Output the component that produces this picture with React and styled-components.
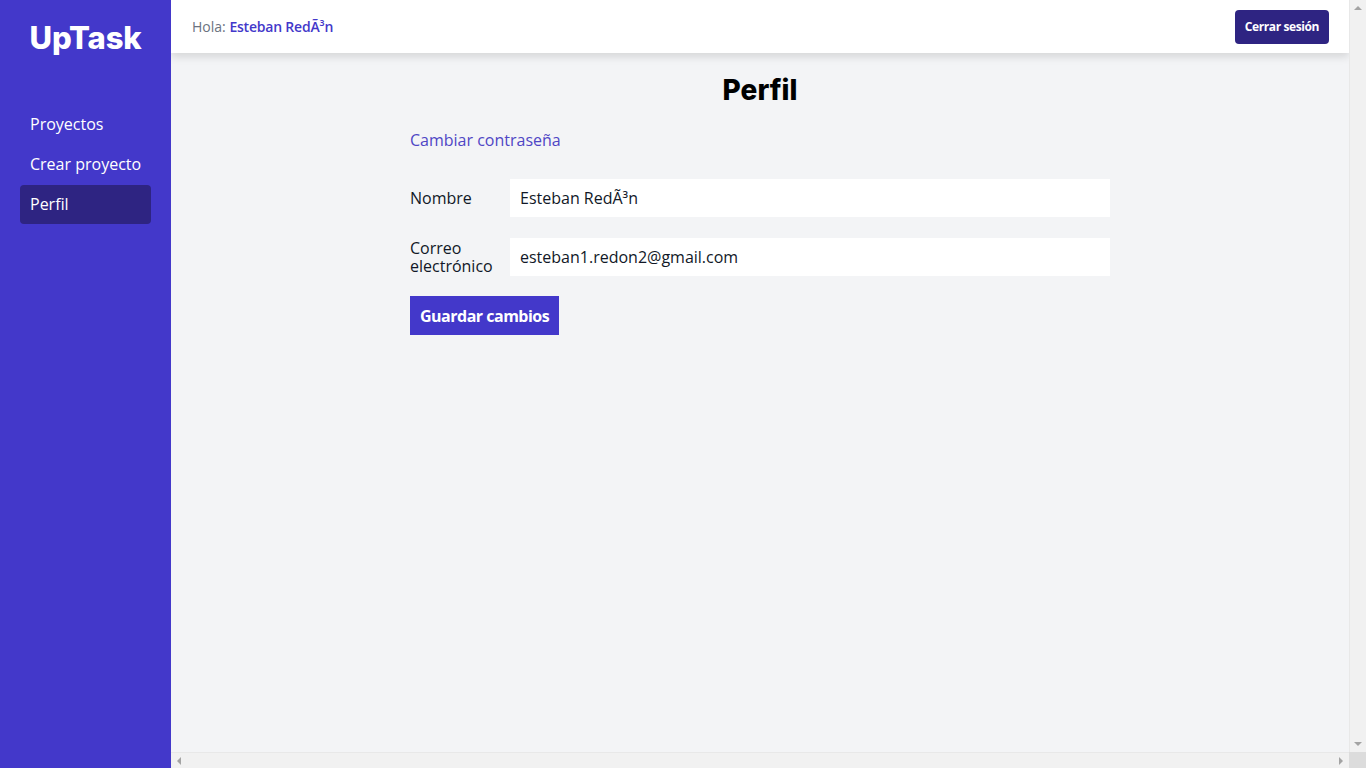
import React from "react";
import styled, { createGlobalStyle } from "styled-components";

const GlobalStyle = createGlobalStyle`
  html, body {
    margin: 0;
    padding: 0;
    height: 100%;
  }
  body {
    font-family: "Open Sans", "Noto Sans", sans-serif;
    color: #111827;
  }
  * {
    box-sizing: border-box;
  }
`;

export default function App() {
  return (
    <>
      <GlobalStyle />
      <Layout>
        <Sidebar>
          <Logo>UpTask</Logo>
          <Nav>
            <NavItem>Proyectos</NavItem>
            <NavItem>Crear proyecto</NavItem>
            <NavItem $active>Perfil</NavItem>
          </Nav>
        </Sidebar>
        <Viewport>
          <Main>
            <Header>
              <Greeting>
                Hola: <strong>Esteban RedÃ³n</strong>
              </Greeting>
              <LogoutButton>Cerrar sesión</LogoutButton>
            </Header>
            <Content>
              <Title>Perfil</Title>
              <Form>
                <PasswordLink href="#">Cambiar contraseña</PasswordLink>
                <Field>
                  <Label>Nombre</Label>
                  <Input defaultValue="Esteban RedÃ³n" />
                </Field>
                <Field>
                  <Label>Correo electrónico</Label>
                  <Input defaultValue="esteban1.redon2@gmail.com" />
                </Field>
                <SaveButton>Guardar cambios</SaveButton>
              </Form>
            </Content>
          </Main>
          <Track $vertical>
            <Arrow $dir="up" />
            <Arrow $dir="down" />
          </Track>
          <Track>
            <Arrow $dir="left" />
            <Arrow $dir="right" />
          </Track>
          <Corner />
        </Viewport>
      </Layout>
    </>
  );
}

const Layout = styled.div`
  display: flex;
  height: 100vh;
  width: 100vw;
  overflow: hidden;
`;

const Sidebar = styled.aside`
  width: 171px;
  flex-shrink: 0;
  background: #4338ca;
  padding: 0 20px;
  display: flex;
  flex-direction: column;
`;

const Logo = styled.h1`
  margin: 21px 0 0;
  text-align: center;
  color: #fff;
  font-family: Inter, sans-serif;
  font-weight: 800;
  font-size: 31px;
  line-height: 34px;
  letter-spacing: -0.2px;
`;

const Nav = styled.nav`
  margin-top: 50px;
  display: flex;
  flex-direction: column;
  gap: 1px;
`;

const NavItem = styled.a`
  display: block;
  color: #fff;
  font-size: 16px;
  line-height: 23px;
  padding: 8px 10px;
  border-radius: 4px;
  white-space: nowrap;
  cursor: pointer;
  background: ${(p) => (p.$active ? "#2e2482" : "transparent")};
`;

const Viewport = styled.div`
  flex: 1;
  display: grid;
  grid-template-columns: minmax(0, 1fr) 17px;
  grid-template-rows: minmax(0, 1fr) 16px;
  min-width: 0;
`;

const Main = styled.main`
  grid-column: 1;
  grid-row: 1;
  background: #f3f4f6;
  overflow: hidden;
`;

const Track = styled.div`
  background: #f1f1f1;
  display: flex;
  flex-direction: ${(p) => (p.$vertical ? "column" : "row")};
  justify-content: space-between;
  align-items: center;
  grid-column: ${(p) => (p.$vertical ? 2 : 1)};
  grid-row: ${(p) => (p.$vertical ? 1 : 2)};
  ${(p) => (p.$vertical ? "border-left: 1px solid #e8e8e8;" : "border-top: 1px solid #e8e8e8;")}
`;

const arrows = {
  up: "border-width: 0 4px 4px; border-color: transparent transparent #a3a3a3; margin: 6px 0;",
  down: "border-width: 4px 4px 0; border-color: #a3a3a3 transparent transparent; margin: 6px 0;",
  left: "border-width: 4px 4px 4px 0; border-color: transparent #a3a3a3 transparent transparent; margin: 0 6px;",
  right: "border-width: 4px 0 4px 4px; border-color: transparent transparent transparent #a3a3a3; margin: 0 6px;",
};

const Arrow = styled.span`
  width: 0;
  height: 0;
  flex-shrink: 0;
  border-style: solid;
  ${(p) => arrows[p.$dir]}
`;

const Corner = styled.div`
  grid-column: 2;
  grid-row: 2;
  background: #dcdcdc;
`;

const Header = styled.header`
  height: 53px;
  background: #fff;
  display: flex;
  align-items: center;
  justify-content: space-between;
  padding: 0 20px 0 21px;
  box-shadow: 0 4px 8px rgba(0, 0, 0, 0.12);
`;

const Greeting = styled.p`
  margin: 0;
  color: #6b7280;
  font-size: 14px;
  strong {
    color: #4338ca;
    font-weight: 600;
    letter-spacing: -0.2px;
  }
`;

const LogoutButton = styled.button`
  height: 34px;
  padding: 0 10px;
  border: none;
  border-radius: 4px;
  background: #2e2482;
  color: #fff;
  font-family: "Open Sans", sans-serif;
  font-weight: 700;
  font-size: 12px;
  letter-spacing: -0.4px;
  cursor: pointer;
`;

const Content = styled.section`
  width: 700px;
  margin: 0 auto;
  padding-top: 22px;
`;

const Title = styled.h2`
  margin: 0;
  text-align: center;
  font-family: Inter, sans-serif;
  font-weight: 800;
  font-size: 28px;
  line-height: 30px;
  color: #000;
`;

const Form = styled.form`
  margin-top: 24px;
  display: flex;
  flex-direction: column;
  align-items: flex-start;
`;

const PasswordLink = styled.a`
  color: #4f46c5;
  font-size: 16px;
  line-height: 22px;
  text-decoration: none;
  margin-bottom: 28px;
`;

const Field = styled.div`
  display: flex;
  align-items: center;
  width: 100%;
  margin-bottom: 21px;
`;

const Label = styled.label`
  width: 100px;
  flex-shrink: 0;
  font-size: 16px;
  line-height: 18px;
  color: #111827;
`;

const Input = styled.input`
  flex: 1;
  height: 38px;
  border: none;
  background: #fff;
  padding: 0 10px;
  font-family: "Open Sans", sans-serif;
  font-size: 16px;
  color: #111827;
  outline: none;
`;

const SaveButton = styled.button`
  margin-top: -1px;
  height: 39px;
  padding: 0 10px;
  border: none;
  background: #4338ca;
  color: #fff;
  font-family: "Open Sans", sans-serif;
  font-weight: 700;
  font-size: 16px;
  letter-spacing: -0.5px;
  cursor: pointer;
`;
